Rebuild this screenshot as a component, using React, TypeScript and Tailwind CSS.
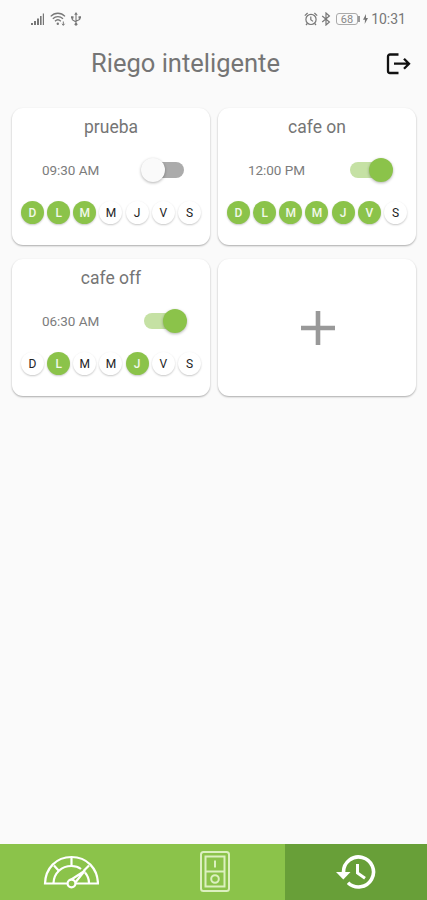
import clsx from "clsx";

type Schedule = {
    name: string;
    time: string;
    enabled: boolean;
    days: number[];
};

const DAYS = ["D", "L", "M", "M", "J", "V", "S"];

const schedules: Schedule[] = [
    { name: "prueba", time: "09:30 AM", enabled: false, days: [0, 1, 2] },
    { name: "cafe on", time: "12:00 PM", enabled: true, days: [0, 1, 2, 3, 4, 5] },
    { name: "cafe off", time: "06:30 AM", enabled: true, days: [1, 4] },
];

function StatusBar() {
    return (
        <div className="flex h-9 items-center justify-between pl-[30px] pr-[21px] pt-0.5 text-[#777]">
            <div className="flex items-center gap-[5px]">
                <svg width="15" height="14" viewBox="0 0 15 14" fill="currentColor">
                    <path d="M1 11h2v2H1zM4 9h2v4H4zM7 6.5h2V13H7zM10 4h1.6v9H10zM12.8 1.5h1.2V13h-1.2z" />
                </svg>
                <svg width="16" height="14" viewBox="0 0 16 14" fill="none" stroke="currentColor" strokeWidth="1.3">
                    <path d="M.7 4.4C4.8.2 11 .2 15 4.4M2.8 6.8c3-3 7.2-3 10.2 0M5 9.2c1.8-1.8 4-1.8 5.8 0" />
                    <circle cx="7.8" cy="11.8" r="1.2" fill="currentColor" stroke="none" />
                    <path d="M13.3 9.5v3.8M12 11.8l1.3 1.5 1.3-1.5" strokeWidth="1" />
                </svg>
                <svg width="10" height="14" viewBox="0 0 10 14" fill="none" stroke="currentColor" strokeWidth="1.1">
                    <path d="M5 2v11M1.3 5.5v2.3L5 10M8.7 5.5v2L5 9.2" />
                    <path d="M5 0l1.8 2.8H3.2zM0 4.2h2.5v2.3H0zM7.5 4.2H10v2.3H7.5z" fill="currentColor" stroke="none" />
                    <circle cx="5" cy="12.3" r="1.4" fill="currentColor" stroke="none" />
                </svg>
            </div>
            <div className="flex items-center">
                <svg width="14" height="14" viewBox="0 0 14 14" fill="none" stroke="currentColor" strokeWidth="1.2">
                    <circle cx="7" cy="7.4" r="5.1" />
                    <path d="M.8 3.6L3.6 1M13.2 3.6L10.4 1M6.8 4.6v3L9 9.4M3.3 11.5L2 13M10.7 11.5L12 13" />
                </svg>
                <svg className="ml-[3px]" width="10" height="14" viewBox="0 0 10 14" fill="none" stroke="currentColor" strokeWidth="1.2">
                    <path d="M1.2 4l7.2 6L5 13V1l3.4 3-7.2 6" />
                </svg>
                <div className="ml-[5px] flex h-3 w-[22px] items-center justify-center rounded-[3px] border border-[#aaa] text-[11px] leading-none tracking-wide text-[#888]">
                    68
                </div>
                <div className="h-1.5 w-0.5 bg-[#999]" />
                <svg className="ml-[3px]" width="5" height="10" viewBox="0 0 5 10" fill="currentColor">
                    <path d="M3 0L0 5.7h2L1.7 10 5 4.1H3z" />
                </svg>
                <span className="ml-[3px] text-[14px] leading-none">10:31</span>
            </div>
        </div>
    );
}

function Header() {
    return (
        <header className="flex h-[72px] items-start pt-[9px]">
            <h1 className="w-[371px] text-center text-[25.5px] leading-9 text-[#757575]">Riego inteligente</h1>
            <button className="ml-[15px] mt-2">
                <svg width="25" height="22" viewBox="0 0 25 22" fill="none" stroke="#111" strokeWidth="2.3">
                    <path d="M12.500 1.500H4A2 2 0 0 0 2 3.500v14.500a2 2 0 0 0 2 2h8.500" />
                    <path d="M8 10.700h15M18 5.700l5 5-5 5" />
                </svg>
            </button>
        </header>
    );
}

function Toggle({ on }: { on: boolean }) {
    return (
        <div
            className={clsx(
                "flex h-4 w-10 items-center rounded-full",
                on ? "justify-end bg-[#c5e1a4]" : "justify-start bg-[#ababab]"
            )}
        >
            <div
                className={clsx(
                    "size-6 shrink-0 rounded-full shadow-[0_1px_3px_rgba(0,0,0,0.3)]",
                    on ? "-mr-[3px] bg-[#8bc34a]" : "-ml-[3px] bg-[#fafafa]"
                )}
            />
        </div>
    );
}

function ScheduleCard({ schedule }: { schedule: Schedule }) {
    return (
        <div className="h-[137px] rounded-[11px] bg-white px-[9px] shadow-[0_1px_2px_rgba(0,0,0,0.32)]">
            <h2 className="pt-2 text-center text-[17.5px] leading-[22px] text-[#757575]">{schedule.name}</h2>
            <div className="mt-5 flex h-6 items-center justify-between pl-[21px] pr-[17px]">
                <span className="pt-px text-[13.5px] tracking-[-0.05px] text-[#7c7c7c]">{schedule.time}</span>
                <Toggle on={schedule.enabled} />
            </div>
            <div className="mt-[19px] flex justify-between">
                {DAYS.map((day, i) => (
                    <span
                        key={i}
                        className={clsx(
                            "flex size-[23px] items-center justify-center rounded-full text-[12px] shadow-[0_1px_2px_rgba(0,0,0,0.22)]",
                            schedule.days.includes(i)
                                ? "bg-[#8bc34a] font-medium text-[#f1f8e9]"
                                : "bg-white text-[#222]"
                        )}
                    >
                        {day}
                    </span>
                ))}
            </div>
        </div>
    );
}

function BottomNav() {
    return (
        <nav className="grid h-14 grid-cols-3 bg-[#8bc34a] text-white">
            <button className="flex items-center justify-center">
                <svg width="56" height="34" viewBox="0 0 56 34" fill="none" stroke="currentColor" strokeWidth="2.2">
                    <path d="M24 28.500H2C2.500 13.500 13 2 28.500 2S54.500 13.500 55 28.500H32" />
                    <path d="M10.500 28C11 18 18.500 11 28.500 11c4 0 7 1 9.500 3M42 17.500c2.500 3 4 6.500 4 10.500" />
                    <path d="M28.500 2v9M11 10.500l5 5.500M46 10.500l-5.500 5.500" />
                    <path d="M26 26L41.500 16 31.500 28.500" strokeLinejoin="round" />
                    <circle cx="28.500" cy="28.500" r="3.900" fill="#8bc34a" />
                </svg>
            </button>
            <button className="flex items-center justify-center pb-0.5 pl-[3px]">
                <svg width="30" height="41" viewBox="0 0 30 41" fill="none" stroke="#dcf0bf" strokeWidth="2">
                    <rect x="1" y="1" width="28" height="39" rx="2.500" />
                    <rect x="5.500" y="5.500" width="19" height="30" />
                    <path d="M5.500 20.500h19M15 9.500v7" />
                    <circle cx="15" cy="28" r="3.800" />
                </svg>
            </button>
            <button className="flex items-center justify-center bg-[#689f38]">
                <svg width="40" height="36" viewBox="0 0 40 36" fill="none" stroke="currentColor" strokeWidth="3.600">
                    <path d="M7.500 18A15 15 0 1 1 12 28.700" />
                    <path d="M21.500 10v9l7.500 5.200" strokeWidth="3" />
                    <path d="M0 18h14.500l-7.200 7.500z" fill="currentColor" stroke="none" />
                </svg>
            </button>
        </nav>
    );
}

export default function App() {
    return (
        <div className="flex h-screen w-full flex-col bg-[#fafafa] font-['Roboto',sans-serif]">
            <StatusBar />
            <Header />
            <main className="grid flex-1 grid-cols-2 content-start gap-x-2 gap-y-3.5 pl-3 pr-[11px]">
                {schedules.map((schedule) => (
                    <ScheduleCard key={schedule.name} schedule={schedule} />
                ))}
                <button className="flex h-[137px] items-center justify-center rounded-[11px] bg-white pl-px shadow-[0_1px_2px_rgba(0,0,0,0.32)]">
                    <svg width="34" height="34" viewBox="0 0 34 34" fill="none" stroke="#999" strokeWidth="4.600">
                        <path d="M17 0v34M0 17h34" />
                    </svg>
                </button>
            </main>
            <BottomNav />
        </div>
    );
}
